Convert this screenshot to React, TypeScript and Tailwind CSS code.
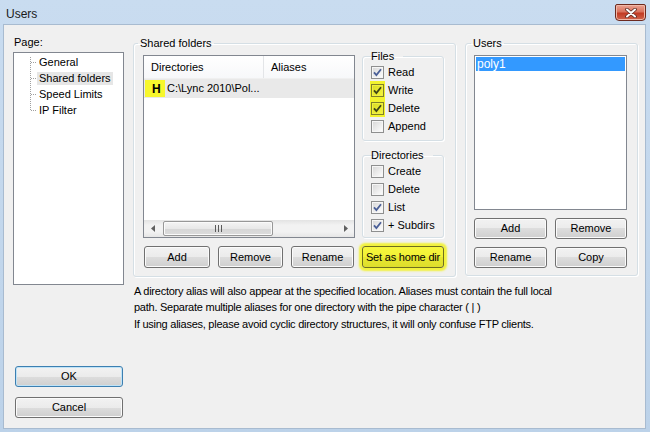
import React from "react";

const GRAD =
  "bg-[linear-gradient(to_bottom,#f2f2f2_0%,#ebebeb_50%,#dddddd_50%,#cfcfcf_100%)]";

function Btn({
  children,
  className = "",
  variant = "normal",
}: {
  children: React.ReactNode;
  className?: string;
  variant?: "normal" | "default" | "hl";
}) {
  const base =
    "flex items-center justify-center rounded-[3px] border text-[11px] text-black leading-none shrink-0";
  const v =
    variant === "default"
      ? `border-[#3c7fb1] ${GRAD} shadow-[inset_0_0_0_1px_#bfe3f7]`
      : variant === "hl"
      ? "border-[#6e6e1f] bg-[linear-gradient(to_bottom,#f7f73c_0%,#f1f136_50%,#e7e730_50%,#dede2c_100%)] shadow-[0_0_2px_3px_#f2f23c] tracking-[-0.2px]"
      : `border-[#707070] ${GRAD} shadow-[inset_0_0_0_1px_#fbfbfb]`;
  return <div className={`${base} ${v} ${className}`}>{children}</div>;
}

function Check({
  label,
  checked = false,
  hl = false,
}: {
  label: string;
  checked?: boolean;
  hl?: boolean;
}) {
  return (
    <div className="flex items-center h-[18px]">
      <div
        className={`h-[18px] w-[15px] pl-[1px] flex items-center ${
          hl ? "bg-[#f3f32e]" : ""
        }`}
      >
        <div
          className={`w-[13px] h-[13px] border flex items-center justify-center ${
            hl
              ? "border-[#80802a] bg-[linear-gradient(135deg,#dada28,#f6f63a)] shadow-[inset_0_0_0_1px_#f0f040]"
              : "border-[#8e8f8f] bg-[linear-gradient(135deg,#d6d6d6,#ffffff)] shadow-[inset_0_0_0_1px_#f6f6f6]"
          }`}
        >
          {checked && (
            <svg width="9" height="9" viewBox="0 0 9 9">
              <path
                d="M1 4.3 L3.4 7 L8 1.2"
                fill="none"
                stroke={hl ? "#3d4418" : "#4a5f97"}
                strokeWidth="1.8"
              />
            </svg>
          )}
        </div>
      </div>
      <span className="ml-[3px]">{label}</span>
    </div>
  );
}

function TreeLines() {
  return (
    <svg width="12" height="64" viewBox="0 0 12 64" className="shrink-0">
      <line x1="6.5" y1="3" x2="6.5" y2="57" stroke="#a0a0a0" strokeDasharray="1 1" />
      {[8, 24, 40, 56].map((y) => (
        <line key={y} x1="7" y1={y + 0.5} x2="12" y2={y + 0.5} stroke="#a0a0a0" strokeDasharray="1 1" />
      ))}
    </svg>
  );
}

export default function App() {
  return (
    <div className="w-[650px] h-[432px] overflow-hidden flex flex-col bg-[linear-gradient(to_bottom,#c9dcf0,#bcd2e9)] font-['Liberation_Sans',Arial,sans-serif] text-[11px] text-black">
      {/* Title bar */}
      <div className="h-[24px] shrink-0 flex items-start justify-between pl-[6px] pr-[4px]">
        <span className="text-[12px] mt-[5px] text-[#1a1a1a]">Users</span>
        <div className="mt-[4px] w-[31px] h-[17px] rounded-b-[4px] rounded-t-[2px] border border-[#6d2a1f] bg-[linear-gradient(to_bottom,#eaa293_0%,#d9735e_45%,#c23b24_55%,#d0654d_100%)] flex items-center justify-center shadow-[inset_0_0_0_1px_#f0b8a8]">
          <svg width="12" height="10" viewBox="0 0 12 10">
            <path d="M2 1.5 L10 8.5 M10 1.5 L2 8.5" stroke="#5a2a22" strokeWidth="3.6" strokeLinecap="round" />
            <path d="M2 1.5 L10 8.5 M10 1.5 L2 8.5" stroke="#ffffff" strokeWidth="2" strokeLinecap="round" />
          </svg>
        </div>
      </div>

      {/* Body */}
      <div className="flex-1 ml-[3px] mr-[4px] mb-[3px] bg-[#f0f0f0] border border-[#a8bbd0] flex pl-[9px] pt-[9px] pb-[10px]">
        {/* Left column */}
        <div className="w-[111px] shrink-0 flex flex-col">
          <div className="h-[18px] leading-[14px] pl-[1px] pt-[1px]">Page:</div>
          <div className="h-[233px] border border-[#828790] bg-white pt-[1px] flex">
            <div className="w-[10px]" />
            <TreeLines />
            <div className="flex flex-col ml-[1px]">
              <div className="h-[16px] flex items-center px-[2px]">General</div>
              <div className="h-[16px] flex items-center">
                <span className="bg-[#e6e6e6] px-[2px] h-[13px] flex items-center">Shared folders</span>
              </div>
              <div className="h-[16px] flex items-center px-[2px]">Speed Limits</div>
              <div className="h-[16px] flex items-center px-[2px]">IP Filter</div>
            </div>
          </div>
          <div className="flex-1" />
          <Btn variant="default" className="ml-[2px] w-[108px] h-[21px]">OK</Btn>
          <Btn className="ml-[2px] mt-[10px] w-[108px] h-[21px]">Cancel</Btn>
        </div>

        {/* Right part */}
        <div className="ml-[9px] flex flex-col">
          <div className="flex mt-[2px]">
            {/* Shared folders */}
            <fieldset className="w-[323px] h-[241px] border border-[#d5dfe5] rounded-[3px] shadow-[inset_1px_1px_0_#ffffff,1px_1px_0_#ffffff] shrink-0">
              <legend className="ml-[4px] px-[2px] leading-[14px]">Shared folders</legend>
              <div className="flex">
                {/* List view */}
                <div className="ml-[9px] mt-[5px] w-[212px] h-[183px] border border-[#828790] bg-white flex flex-col">
                  <div className="h-[23px] flex shrink-0 bg-[linear-gradient(to_bottom,#ffffff,#f7f8fa)] border-b border-[#f0f0f0]">
                    <div className="w-[120px] border-r border-[#e3e5e8] flex items-center pl-[7px]">Directories</div>
                    <div className="flex items-center pl-[7px]">Aliases</div>
                  </div>
                  <div className="h-[19px] bg-[#e9e9e9] flex items-center shrink-0">
                    <div className="ml-[1px] w-[20px] h-[17px] bg-[#f7f72c] flex items-center pl-[7px] font-bold text-[12px]">H</div>
                    <span className="ml-[2px]">C:\Lync 2010\Pol...</span>
                  </div>
                  <div className="flex-1" />
                  <div className="h-[17px] shrink-0 flex items-center bg-[linear-gradient(to_bottom,#e3e3e3,#f2f2f2_30%,#f2f2f2_70%,#e6e6e6)]">
                    <div className="w-[17px] h-[17px] flex items-center justify-center">
                      <svg width="4" height="7" viewBox="0 0 4 7"><path d="M4 0 L0 3.5 L4 7 Z" fill="#606060" /></svg>
                    </div>
                    <div className="ml-[2px] w-[110px] h-[15px] rounded-[2px] border border-[#979797] bg-[linear-gradient(to_bottom,#f4f4f4,#e8e8e8_50%,#d6d6d6_51%,#dcdcdc)] flex items-center justify-center shadow-[inset_0_0_0_1px_#fafafa]">
                      <svg width="7" height="7" viewBox="0 0 7 7">
                        <path d="M0.5 0 V7 M3.5 0 V7 M6.5 0 V7" stroke="#5a5a5a" strokeWidth="1" />
                      </svg>
                    </div>
                    <div className="flex-1" />
                    <div className="w-[17px] h-[17px] flex items-center justify-center">
                      <svg width="4" height="7" viewBox="0 0 4 7"><path d="M0 0 L4 3.5 L0 7 Z" fill="#606060" /></svg>
                    </div>
                  </div>
                </div>

                {/* Files/Directories */}
                <div className="ml-[7px] -mt-[1px] w-[82px] flex flex-col">
                  <fieldset className="h-[92px] border border-[#d5dfe5] rounded-[3px] shadow-[inset_1px_1px_0_#ffffff,1px_1px_0_#ffffff] pl-[7px]">
                    <legend className="ml-[6px] px-[2px] leading-[14px] -translate-x-[7px]">Files</legend>
                    <Check label="Read" checked />
                    <Check label="Write" checked hl />
                    <Check label="Delete" checked hl />
                    <Check label="Append" />
                  </fieldset>
                  <fieldset className="mt-[7px] h-[90px] border border-[#d5dfe5] rounded-[3px] shadow-[inset_1px_1px_0_#ffffff,1px_1px_0_#ffffff] pl-[7px]">
                    <legend className="ml-[6px] px-[2px] leading-[14px] -translate-x-[7px]">Directories</legend>
                    <Check label="Create" />
                    <Check label="Delete" />
                    <Check label="List" checked />
                    <Check label="+ Subdirs" checked />
                  </fieldset>
                </div>
              </div>
              <div className="flex mt-[8px]">
                <Btn className="ml-[10px] w-[66px] h-[22px]">Add</Btn>
                <Btn className="ml-[8px] w-[65px] h-[22px]">Remove</Btn>
                <Btn className="ml-[8px] w-[63px] h-[22px]">Rename</Btn>
                <Btn variant="hl" className="ml-[8px] w-[82px] h-[22px]">Set as home dir</Btn>
              </div>
            </fieldset>

            {/* Users */}
            <fieldset className="ml-[9px] w-[173px] h-[240px] border border-[#d5dfe5] rounded-[3px] shadow-[inset_1px_1px_0_#ffffff,1px_1px_0_#ffffff] shrink-0">
              <legend className="ml-[5px] px-[2px] leading-[14px]">Users</legend>
              <div className="ml-[8px] mt-[5px] w-[153px] h-[155px] border border-[#828790] bg-white p-[1px]">
                <div className="h-[14px] bg-[#3399ff] text-white flex items-center pl-[1px] text-[12px]">poly1</div>
              </div>
              <div className="flex ml-[8px] mt-[8px]">
                <Btn className="w-[73px] h-[21px]">Add</Btn>
                <Btn className="ml-[8px] w-[72px] h-[21px]">Remove</Btn>
              </div>
              <div className="flex ml-[8px] mt-[8px]">
                <Btn className="w-[73px] h-[21px]">Rename</Btn>
                <Btn className="ml-[8px] w-[72px] h-[21px]">Copy</Btn>
              </div>
            </fieldset>
          </div>

          <div className="mt-[6px] pl-[1px] leading-[16px] tracking-[-0.25px]">
            <div>A directory alias will also appear at the specified location. Aliases must contain the full local</div>
            <div>path. Separate multiple aliases for one directory with the pipe character ( | )</div>
            <div className="mt-[1px]">If using aliases, please avoid cyclic directory structures, it will only confuse FTP clients.</div>
          </div>
        </div>
      </div>
    </div>
  );
}
